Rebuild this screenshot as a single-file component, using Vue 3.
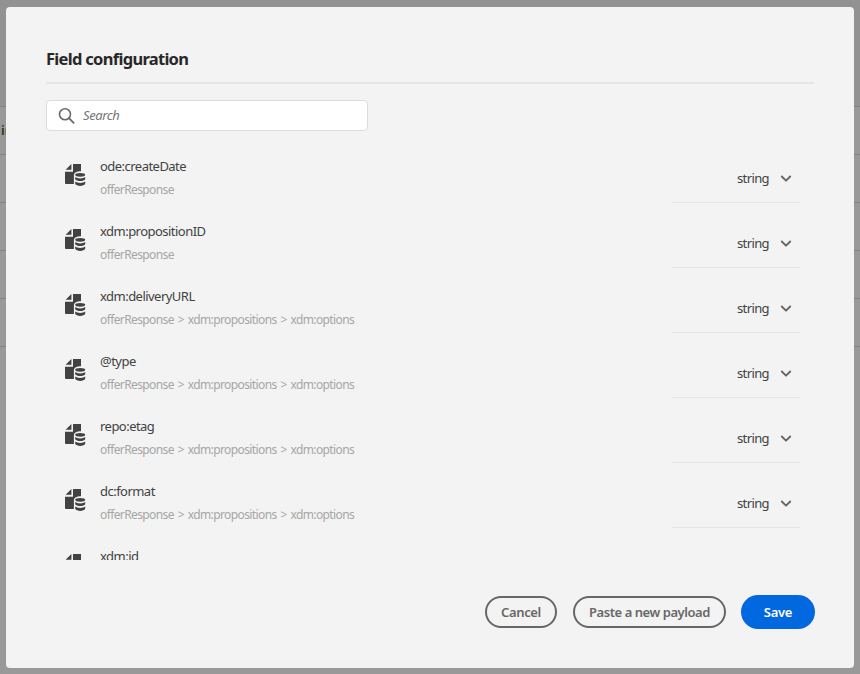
<script setup>
const nested = 'offerResponse > xdm:propositions > xdm:options'
const fields = [
  { name: 'ode:createDate', path: 'offerResponse', type: 'string' },
  { name: 'xdm:propositionID', path: 'offerResponse', type: 'string' },
  { name: 'xdm:deliveryURL', path: nested, type: 'string' },
  { name: '@type', path: nested, type: 'string' },
  { name: 'repo:etag', path: nested, type: 'string' },
  { name: 'dc:format', path: nested, type: 'string' },
  { name: 'xdm:id' },
]
</script>

<template>
  <div class="page">
    <div class="backdrop">
      <div class="band top"></div>
      <div class="band head"><span>ir</span></div>
      <div v-for="n in 4" :key="n" class="band"></div>
      <div class="band rest"></div>
    </div>
    <section class="dialog" role="dialog">
      <h1>Field configuration</h1>
      <label class="search">
        <svg width="18" height="18" viewBox="0 0 18 18" fill="none" stroke="#6a6a6a">
          <circle cx="7" cy="7.2" r="5.5" stroke-width="1.6" />
          <path d="M11 11.2L15.6 15.8" stroke-width="1.9" stroke-linecap="round" />
        </svg>
        <span>Search</span>
      </label>
      <div class="list">
        <div v-for="f in fields" :key="f.name" class="row">
          <svg class="doc" width="22" height="24" viewBox="0 0 22 24" fill="#424242">
            <path d="M.6 6.8L6.4 1V6.8ZM8 1H16V8.2C12 8.2 8.9 9.5 8.9 12V21H1Q0 21 0 20V8.8H8Z" />
            <ellipse cx="15.2" cy="11.8" rx="5" ry="1.9" />
            <path d="M10.2 14.1C12 16 18.4 16 20.2 14.1V16.3C19 18.7 11.4 18.7 10.2 16.3ZM10.2 18.6C12 20.4 18.4 20.4 20.2 18.6V20.8C19 23.6 11.4 23.6 10.2 20.8Z" />
          </svg>
          <div class="text">
            <div class="name">{{ f.name }}</div>
            <div v-if="f.path" class="path">{{ f.path }}</div>
          </div>
          <div v-if="f.type" class="type">
            <span>{{ f.type }}</span>
            <svg width="12" height="8" viewBox="0 0 12 8" fill="none" stroke="#666" stroke-width="1.9" stroke-linecap="round" stroke-linejoin="round">
              <path d="M1.8 1.5L6 5.7L10.2 1.5" />
            </svg>
          </div>
        </div>
      </div>
      <footer>
        <button class="cancel">Cancel</button>
        <button class="paste">Paste a new payload</button>
        <button class="save">Save</button>
      </footer>
    </section>
  </div>
</template>

<style>
body { margin: 0; overflow: hidden; }
</style>

<style scoped>
* { box-sizing: border-box; }
.page {
  position: relative;
  width: 860px;
  height: 674px;
  padding: 7px 6px;
  overflow: hidden;
  font-family: "Noto Sans", "Open Sans", sans-serif;
  white-space: nowrap;
}
.backdrop { position: absolute; inset: 0; display: flex; flex-direction: column; background: #999; }
.band { height: 48px; border-bottom: 1px solid #838383; }
.top { height: 107px; background: #929292; }
.head { font-size: 13px; font-weight: 600; line-height: 47px; color: #303030; }
.head span { margin-left: 1px; }
.rest { flex: 1; border: 0; }
.dialog {
  position: relative;
  display: flex;
  flex-direction: column;
  width: 848px;
  height: 661px;
  padding: 36px 40px 0;
  border-radius: 4px;
  background: #f3f3f3;
}
h1 {
  margin: 0;
  height: 41px;
  border-bottom: 2px solid #e6e6e6;
  font-size: 16.5px;
  line-height: 32px;
  font-weight: 700;
  letter-spacing: -0.7px;
  color: #282828;
}
.search {
  display: flex;
  align-items: center;
  gap: 8px;
  width: 322px;
  height: 31px;
  margin-top: 16px;
  padding-left: 11px;
  border: 1px solid #dcdcdc;
  border-radius: 4px;
  background: #fff;
  font-size: 13px;
  font-style: italic;
  letter-spacing: -0.4px;
  color: #757575;
}
.search span { margin: 0 0 2px -1px; }
.list { height: 415px; margin-top: 14px; overflow: hidden; }
.row { display: flex; height: 65px; padding: 0 14px 0 18px; }
.doc { margin: 18px 13px 0 1px; }
.text { flex: 1; padding-top: 9px; }
.name { height: 25px; line-height: 24px; font-size: 13px; letter-spacing: -0.53px; color: #424242; }
.path { height: 22px; line-height: 22px; font-size: 12px; letter-spacing: -0.61px; word-spacing: 1.3px; color: #a6a6a6; }
.type {
  display: flex;
  justify-content: flex-end;
  align-items: center;
  gap: 11px;
  width: 128px;
  height: 48px;
  margin-top: 10px;
  padding-right: 8px;
  border-bottom: 1px solid #e5e5e5;
  font-size: 13px;
  letter-spacing: -0.6px;
  color: #424242;
}
.type span { margin-bottom: 2px; }
footer { display: flex; align-items: center; justify-content: flex-end; margin: 35px -1px 0 0; height: 34px; }
button {
  height: 32px;
  padding: 0;
  border: 2px solid #676767;
  border-radius: 17px;
  background: transparent;
  font: 600 13px "Noto Sans", "Open Sans", sans-serif;
  color: #676767;
  white-space: nowrap;
}
.cancel { width: 72px; margin-right: 16px; letter-spacing: -0.35px; }
.paste { width: 153px; margin-right: 15px; letter-spacing: -0.45px; }
.save { width: 74px; height: 34px; border: 0; background: #0268e0; color: #fff; letter-spacing: -0.3px; }
</style>
